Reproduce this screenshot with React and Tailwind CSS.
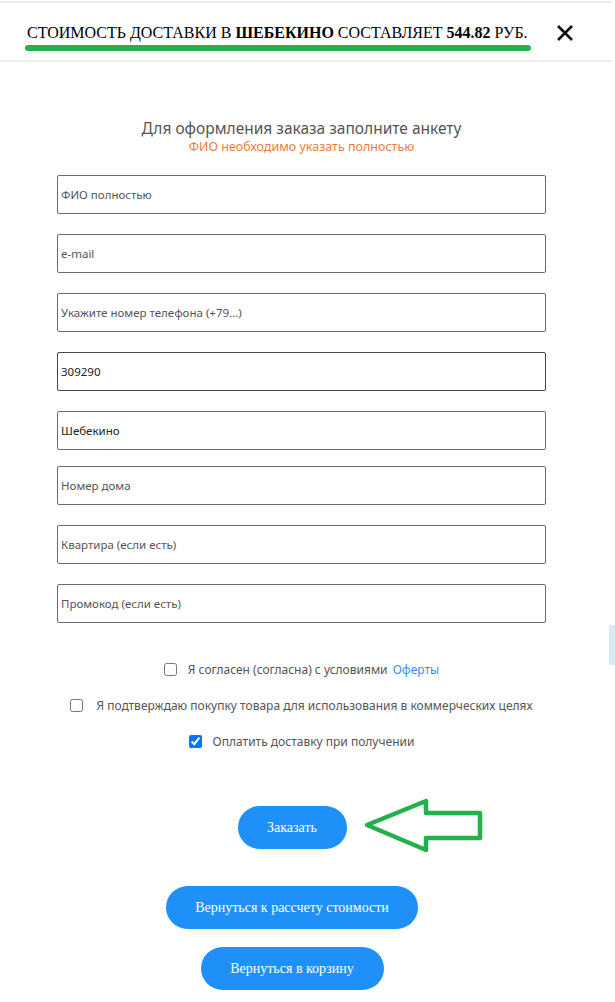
import React from 'react'

const fields = [
  { ph: 'ФИО полностью' },
  { ph: 'e-mail' },
  { ph: 'Укажите номер телефона (+79...)' },
  { val: '309290', dark: true },
  { val: 'Шебекино' },
  { ph: 'Номер дома' },
  { ph: 'Квартира (если есть)' },
  { ph: 'Промокод (если есть)' },
]

const App = () => {
  return (
    <div className="relative w-[615px] h-[1002px] bg-white overflow-hidden font-['Noto_Sans',sans-serif]">
      {/* header */}
      <div className="mt-[1px] mr-[3px] h-[61px] border-y-2 border-[#ececec] flex items-start">
        <div className="ml-[25px] mt-[20px] flex flex-col">
          <div className="px-[2px] font-['Liberation_Serif',serif] text-[16px] leading-[20px] text-black">
            СТОИМОСТЬ ДОСТАВКИ В <b>ШЕБЕКИНО</b> СОСТАВЛЯЕТ <b>544.82</b> РУБ.
          </div>
          <div className="mt-[2px] h-[6px] w-[506px] rounded-full bg-[#22b14c]"></div>
        </div>
        <button className="ml-auto mr-[38px] mt-[21px] text-black">
          <svg width="18" height="18" viewBox="0 0 18 18">
            <path d="M2 2 L16 16 M16 2 L2 16" stroke="#111" strokeWidth="2.6" />
          </svg>
        </button>
      </div>

      {/* form */}
      <div className="ml-[57px] w-[489px] flex flex-col items-center">
        <h2 className="mt-[55px] text-[15.5px] leading-[22px] text-[#555]">Для оформления заказа заполните анкету</h2>
        <p className="text-[12.5px] leading-[16px] text-[#f07b3f]">ФИО необходимо указать полностью</p>

        <div className="mt-[20px] w-full flex flex-col">
          {fields.map((f, i) => (
            <input
              key={i}
              placeholder={f.ph}
              defaultValue={f.val}
              className={`w-full h-[39px] ${i === 0 ? '' : i === 5 ? 'mt-[16px]' : 'mt-[20px]'} rounded-[2px] border ${f.dark ? 'border-[#444]' : 'border-[#6b6b6b]'} px-[3px] text-[11.5px] text-[#222] placeholder:text-[#555] outline-none`}
            />
          ))}
        </div>

        <div className="mt-[40px] flex flex-col items-center gap-[23px] text-[12px] text-[#555]">
          <label className="flex items-center h-[13px]">
            <input type="checkbox" className="m-0 w-[13px] h-[13px]" />
            <span className="ml-[11px]">Я согласен (согласна) с условиями <span className="ml-[2px] text-[#3a8ee6]">Оферты</span></span>
          </label>
          <label className="flex items-center h-[13px]">
            <input type="checkbox" className="m-0 w-[13px] h-[13px]" />
            <span className="ml-[13px]">Я подтверждаю покупку товара для использования в коммерческих целях</span>
          </label>
          <label className="flex items-center h-[13px]">
            <input type="checkbox" defaultChecked className="m-0 w-[13px] h-[13px] accent-[#0075ff]" />
            <span className="ml-[11px]">Оплатить доставку при получении</span>
          </label>
        </div>
      </div>

      {/* buttons */}
      <div className="ml-[57px] w-[470px] flex flex-col items-center font-['Liberation_Serif',serif] text-[14px] text-white">
        <div className="relative mt-[58px]">
          <button className="w-[109px] h-[43px] rounded-full bg-[#1e90f7]">Заказать</button>
          <svg className="absolute left-[126px] top-[-8px]" width="122" height="58" viewBox="0 0 122 58">
            <polygon points="3,27 62,3 62,15 116,15 116,40 62,40 62,52" fill="none" stroke="#22b14c" strokeWidth="4.5" strokeLinejoin="round" />
          </svg>
        </div>
        <button className="mt-[37px] w-[252px] h-[43px] rounded-full bg-[#1e90f7]">Вернуться к рассчету стоимости</button>
        <button className="mt-[18px] w-[183px] h-[43px] rounded-full bg-[#1e90f7]">Вернуться в корзину</button>
      </div>

      <div className="absolute right-0 top-[625px] w-[6px] h-[40px] bg-[#d8eaf4]"></div>
    </div>
  )
}

export default App
